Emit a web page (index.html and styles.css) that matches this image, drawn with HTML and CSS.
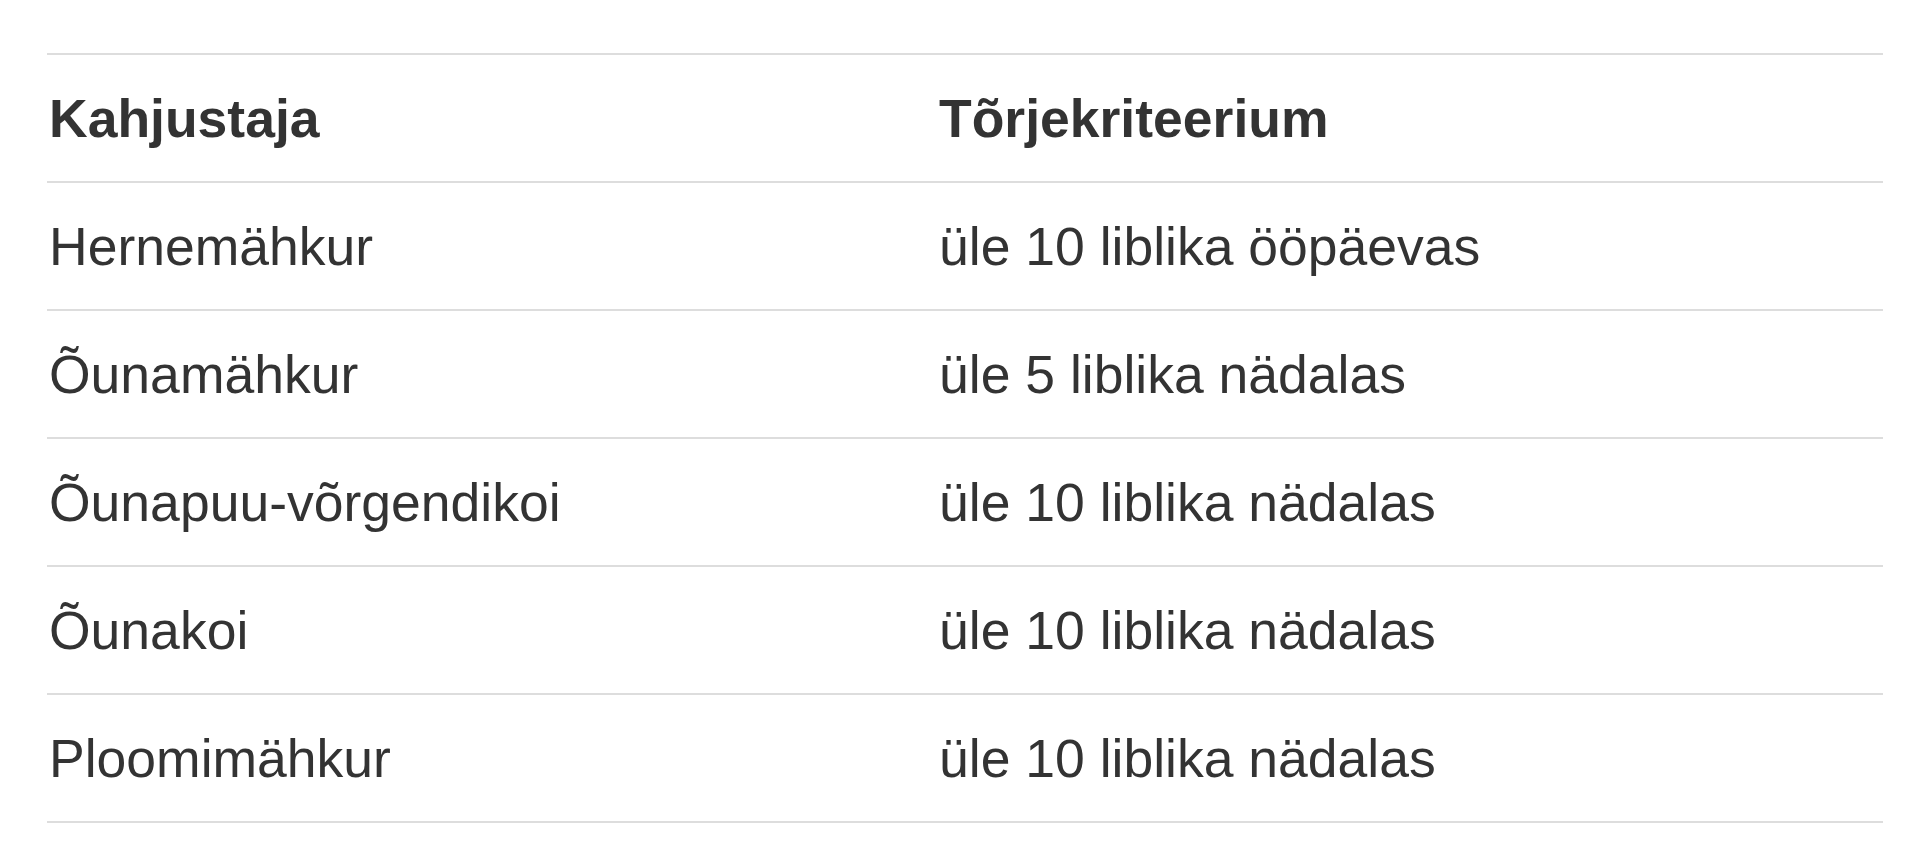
FILE: index.html
```html
<!DOCTYPE html>
<html lang="et">
<head>
<meta charset="utf-8">
<title>Kahjustajad</title>
<link rel="stylesheet" href="styles.css">
</head>
<body>
<div class="page">
  <table class="pests">
    <colgroup>
      <col class="c1">
      <col class="c2">
    </colgroup>
    <thead>
      <tr><th>Kahjustaja</th><th>Tõrjekriteerium</th></tr>
    </thead>
    <tbody>
      <tr><td>Hernemähkur</td><td>üle 10 liblika ööpäevas</td></tr>
      <tr><td>Õunamähkur</td><td>üle 5 liblika nädalas</td></tr>
      <tr><td>Õunapuu-võrgendikoi</td><td>üle 10 liblika nädalas</td></tr>
      <tr><td>Õunakoi</td><td>üle 10 liblika nädalas</td></tr>
      <tr><td>Ploomimähkur</td><td>üle 10 liblika nädalas</td></tr>
    </tbody>
  </table>
</div>
</body>
</html>
```
FILE: styles.css
```css
html, body {
  margin: 0;
  padding: 0;
  background: #ffffff;
}
.page {
  padding: 53px 37px 0 47px;
}
.pests {
  width: 1836px;
  border-collapse: collapse;
  table-layout: fixed;
  font-family: "Liberation Sans", Arial, sans-serif;
  font-size: 53.5px;
  color: #333333;
}
.c1 { width: 890px; }
.c2 { width: 946px; }
.pests th,
.pests td {
  text-align: left;
  padding: 26px 2px 24px;
  line-height: 76px;
  border-top: 2px solid #dddddd;
  white-space: nowrap;
}
.pests th {
  font-weight: bold;
}
.pests tbody tr:last-child td {
  border-bottom: 2px solid #dddddd;
}
```
